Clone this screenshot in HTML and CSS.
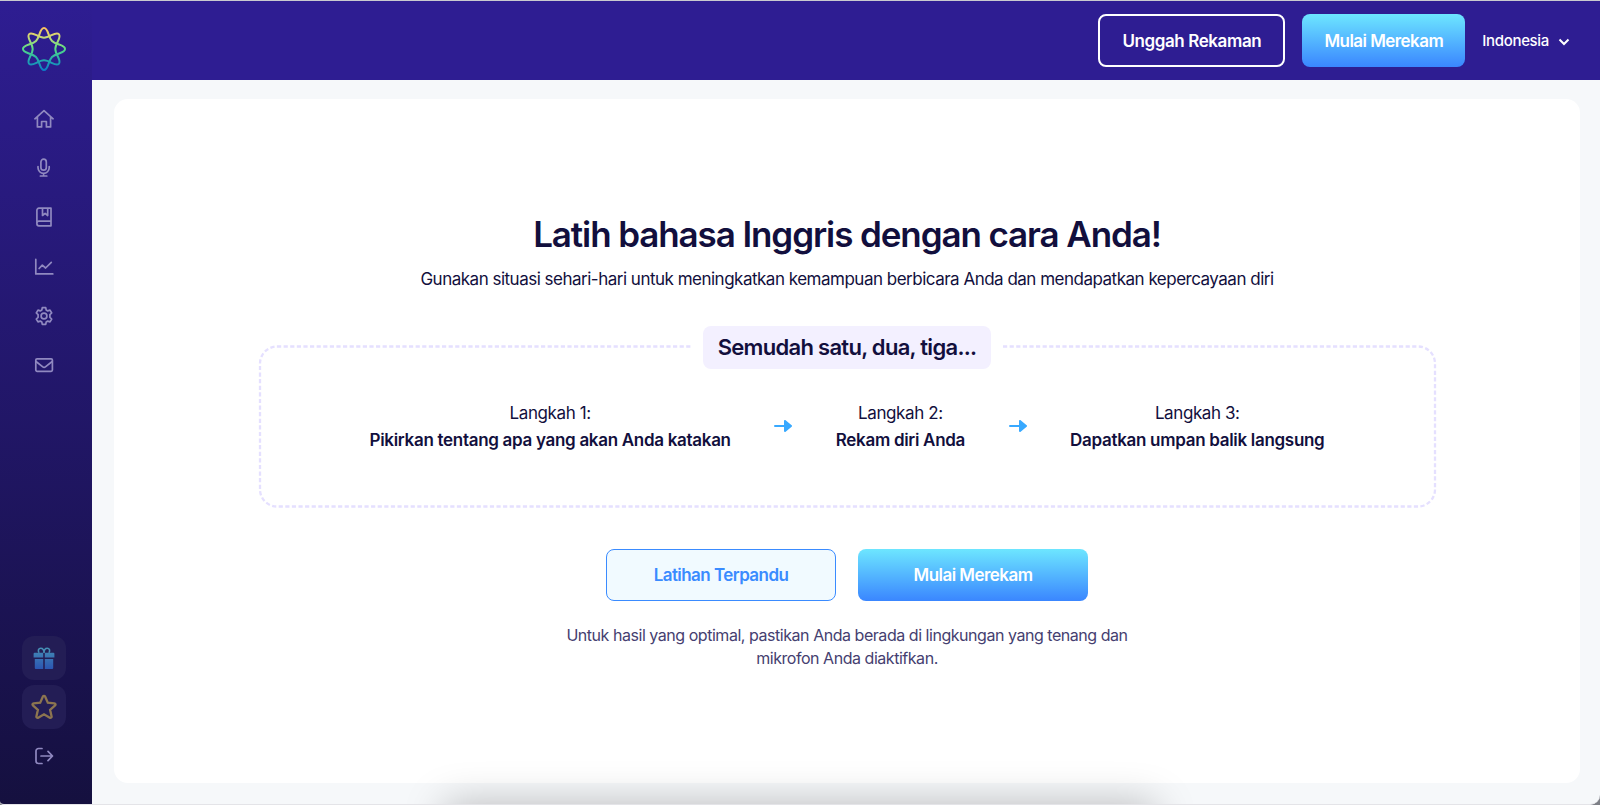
FILE: index.html
```html
<!DOCTYPE html>
<html lang="id">
<head>
  <meta charset="UTF-8">
  <meta name="viewport" content="width=device-width, initial-scale=1.0">
  <title>Latih bahasa Inggris</title>
  <link rel="stylesheet" href="styles.css">
</head>
<body>

<div class="app">
  <aside class="sidebar">
    <a class="logo" href="#">
      <svg width="46" height="46" viewBox="-23 -23 46 46" fill="none" stroke-width="2">
        <defs>
          <linearGradient id="logoA" gradientUnits="userSpaceOnUse" x1="0" y1="-22" x2="0" y2="22">
            <stop offset="0" stop-color="#ffbe5c"/>
            <stop offset=".2" stop-color="#d3d774"/>
            <stop offset=".5" stop-color="#55dc86"/>
            <stop offset=".75" stop-color="#22a9ae"/>
            <stop offset="1" stop-color="#0a78c8"/>
          </linearGradient>
          <linearGradient id="logoB" href="#logoA" gradientTransform="rotate(-45)"/>
        </defs>
        <path stroke="url(#logoA)" d="M0-21C4.5-21 3.8-12.2 8-8S21-4.5 21 0 12.2 3.8 8 8 4.5 21 0 21-3.8 12.2-8 8-21 4.5-21 0-12.2-3.8-8-8-4.5-21 0-21Z"/>
        <path stroke="url(#logoB)" transform="rotate(45)" d="M0-21C4.5-21 3.8-12.2 8-8S21-4.5 21 0 12.2 3.8 8 8 4.5 21 0 21-3.8 12.2-8 8-21 4.5-21 0-12.2-3.8-8-8-4.5-21 0-21Z"/>
      </svg>
    </a>

    <nav class="menu">
      <a href="#">
        <svg viewBox="0 0 20 20"><path d="M.9 9.8 10 1.6l9.1 8.2M3.4 7.8v10.1h4.2v-5.4h4.8v5.4h4.2V7.8"/></svg>
      </a>
      <a href="#">
        <svg viewBox="0 0 20 20"><rect x="6.900" y="1.200" width="5.400" height="11" rx="2.700"/><path d="M4 8.600v1.200a5.600 5.600 0 0 0 11.200 0V8.600M9.600 15.400V18M6.400 18h6.400"/></svg>
      </a>
      <a href="#">
        <svg viewBox="0 0 20 20"><path d="M17 14.200V1.200H4.900a2 2 0 0 0-2 2v13.600a2 2 0 0 0 2 2H17v-4.600H4.900a2 2 0 0 0-2 2M8.500 1.500v7l2.600-2.200 2.600 2.200v-7"/></svg>
      </a>
      <a href="#">
        <svg viewBox="0 0 20 20"><path d="M1.800 2.400v14.500h17M5.100 11.500l3.200-3.400 3.300 2.900 5.700-5.600"/></svg>
      </a>
      <a href="#">
        <svg viewBox="0 0 20 20"><circle cx="10" cy="10" r="2.900"/><path d="M8.300 1.600h3.400l.5 2.400 1.500.9 2.300-.8 1.700 2.900-1.800 1.700v2.600l1.800 1.700-1.700 2.900-2.300-.8-1.500.9-.5 2.400H8.300L7.800 16l-1.500-.9-2.300.8L2.300 13l1.800-1.700V8.700L2.300 7 4 4.100l2.300.8L7.800 4z"/></svg>
      </a>
      <a href="#">
        <svg viewBox="0 0 20 20"><rect x="1.800" y="3.800" width="16.600" height="12.600" rx="1.300"/><path d="m2 6.500 6.800 5.400a2 2 0 0 0 2.600 0l6.800-5.400"/></svg>
      </a>
    </nav>

    <div class="extras">
      <a class="tile gift" href="#">
        <svg width="22" height="22" viewBox="0 0 22 22">
          <defs>
            <linearGradient id="giftFill" gradientUnits="userSpaceOnUse" x1="0" y1="0" x2="0" y2="22">
              <stop offset="0" stop-color="#468fb5"/>
              <stop offset="1" stop-color="#2b56b2"/>
            </linearGradient>
          </defs>
          <path fill="url(#giftFill)" d="M1.600 5.800h8.600v4.600H.6V6.800a1 1 0 0 1 1-1ZM11.800 5.800h8.600a1 1 0 0 1 1 1v3.600h-9.600ZM1.800 12h8.400v10H2.800a1 1 0 0 1-1-1ZM11.800 12h8.400v9a1 1 0 0 1-1 1h-7.400Z"/>
          <path fill="none" stroke="#468fb5" stroke-width="1.600" d="M6.200 5.800C4.300 3.500 5.800 1.200 7.700 1.200S11 3 11 6C11 3 12.400 1.200 14.300 1.200S17.700 3.500 15.800 5.800"/>
        </svg>
      </a>
      <a class="tile star" href="#">
        <svg width="26" height="26" viewBox="0 0 26 26"><path d="M13 1.800c.5 0 .9.300 1.100.7l2.700 6.100 6.600.7c1.100.1 1.500 1.300.7 2l-5 4.500 1.500 6.600c.2 1-.9 1.800-1.800 1.300L13 20.300l-5.800 3.400c-.9.500-2-.3-1.800-1.300l1.500-6.600-5-4.500c-.8-.7-.4-1.900.7-2l6.600-.7 2.700-6.100c.2-.4.600-.7 1.100-.7Z"/></svg>
      </a>
      <a class="logout" href="#">
        <svg viewBox="0 0 20 20"><path d="M8 2.500H4.500A2.500 2.500 0 0 0 2 5v10a2.500 2.500 0 0 0 2.500 2.500H8M7 10h11M14 5.300l4.500 4.700-4.500 4.700"/></svg>
      </a>
    </div>
  </aside>

  <header class="topbar">
    <button class="btn btn-outline">Unggah Rekaman</button>
    <button class="btn btn-primary">Mulai Merekam</button>
    <div class="language">
      <span>Indonesia</span>
      <svg width="12" height="8" viewBox="0 0 12 8"><path d="m1.500 1.500 4.500 4.500 4.500-4.500"/></svg>
    </div>
  </header>

  <main class="content">
    <section class="card">
      <h1>Latih bahasa Inggris dengan cara Anda!</h1>
      <p class="subtitle">Gunakan situasi sehari-hari untuk meningkatkan kemampuan berbicara Anda dan mendapatkan kepercayaan diri</p>

      <div class="steps">
        <svg class="steps-border"><rect x="1" y="1.500" width="1175" height="160" rx="17"/></svg>
        <div class="steps-title"><h2>Semudah satu, dua, tiga...</h2></div>
        <div class="step"><span>Langkah 1:</span><strong>Pikirkan tentang apa yang akan Anda katakan</strong></div>
        <svg class="arrow" width="18" height="12" viewBox="0 0 18 12"><path d="M1 6h10"/><path class="head" d="M11 1v10l6-5z"/></svg>
        <div class="step"><span>Langkah 2:</span><strong>Rekam diri Anda</strong></div>
        <svg class="arrow" width="18" height="12" viewBox="0 0 18 12"><path d="M1 6h10"/><path class="head" d="M11 1v10l6-5z"/></svg>
        <div class="step"><span>Langkah 3:</span><strong>Dapatkan umpan balik langsung</strong></div>
      </div>

      <div class="actions">
        <button class="btn btn-light">Latihan Terpandu</button>
        <button class="btn btn-primary">Mulai Merekam</button>
      </div>
      <p class="note">Untuk hasil yang optimal, pastikan Anda berada di lingkungan yang tenang dan mikrofon Anda diaktifkan.</p>
    </section>
  </main>
</div>

</body>
</html>
```
FILE: styles.css
```css
* {
  box-sizing: border-box;
}

html {
  background: #7d7f86;
}

body {
  margin: 0;
  font-family: Inter, "Liberation Sans", sans-serif;
  color: #120f3d;
}

.app {
  position: relative;
  display: grid;
  grid-template-columns: 92px 1fr;
  grid-template-rows: 79px 1fr;
  height: 100vh;
  overflow: hidden;
  border-top: 1px solid #c9c9cf;
  border-bottom: 1px solid #e4e4e8;
  border-radius: 0 0 10px 4px;
  background: #f6f8fa;
}

/* soft shadow rising from the bottom edge */
.app::after {
  content: "";
  position: absolute;
  top: 100%;
  left: 445px;
  width: 710px;
  height: 60px;
  box-shadow: 0 0 40px rgba(0, 0, 0, 0.25);
}

/* sidebar */
.sidebar {
  grid-row: 1 / 3;
  display: flex;
  flex-direction: column;
  align-items: center;
  padding: 25px 5px 26px 0;
  background: linear-gradient(#2e1d92, #15103f);
}

.logo,
.logo svg {
  display: block;
}

.menu {
  display: flex;
  flex-direction: column;
  gap: 29.2px;
  margin-top: 37px;
}

.menu svg,
.logout svg {
  display: block;
  width: 20px;
  height: 20px;
  fill: none;
  stroke: #9089c0;
  stroke-width: 1.7;
  stroke-linecap: round;
  stroke-linejoin: round;
}

.extras {
  display: flex;
  flex-direction: column;
  align-items: center;
  gap: 5px;
  margin-top: auto;
}

.tile {
  display: flex;
  align-items: center;
  justify-content: center;
  width: 44px;
  height: 44px;
  border-radius: 12px;
  background: #231d55;
}

.star svg {
  fill: none;
  stroke: #8c7550;
  stroke-width: 2.3;
}

.logout {
  padding: 12px;
}

/* top bar */
.topbar {
  display: flex;
  align-items: center;
  justify-content: flex-end;
  gap: 17px;
  padding-right: 30px;
  background: #2e1d92;
}

.btn {
  height: 52px;
  padding: 0;
  border: none;
  border-radius: 8px;
  font-family: inherit;
  font-size: 17px;
  font-weight: 600;
  letter-spacing: -0.55px;
  white-space: nowrap;
  color: #fff;
}

.topbar .btn {
  height: 53px;
}

.btn-outline {
  width: 187px;
  border: 2px solid #fff;
  letter-spacing: -0.4px;
  background: none;
}

.btn-primary {
  width: 163px;
  background: linear-gradient(#6de6ff, #3a86ff);
}

.language {
  display: flex;
  align-items: center;
  gap: 9px;
  font-size: 15px;
  font-weight: 500;
  letter-spacing: -0.33px;
  color: #fff;
}

.language svg {
  margin-top: 3px;
  fill: none;
  stroke: #fff;
  stroke-width: 2;
}

/* main card */
.content {
  padding: 19px 20px 21px 22px;
}

.card {
  display: flex;
  flex-direction: column;
  align-items: center;
  height: 684px;
  padding-top: 111px;
  border-radius: 14px;
  background: #fff;
}

h1 {
  margin: 0;
  font-size: 35px;
  font-weight: 600;
  line-height: 48px;
  letter-spacing: -1.1px;
}

.subtitle {
  margin: 9px 0 0;
  font-size: 17px;
  line-height: 24px;
  letter-spacing: -0.5px;
}

.steps {
  position: relative;
  display: flex;
  align-items: center;
  justify-content: center;
  gap: 43.5px;
  width: 1177px;
  height: 162px;
  margin-top: 54px;
}

.steps-border {
  position: absolute;
  inset: 0;
  width: 100%;
  height: 100%;
  overflow: visible;
  fill: none;
  stroke: #e5e0ff;
  stroke-width: 2.3;
  stroke-dasharray: 4.2 2.4;
}

.steps-title {
  position: absolute;
  top: -19px;
  left: 50%;
  transform: translateX(-50%);
  padding: 0 11px;
  background: #fff;
}

h2 {
  margin: 0;
  width: 288px;
  border-radius: 8px;
  font-size: 22px;
  font-weight: 600;
  line-height: 43px;
  letter-spacing: -0.7px;
  text-align: center;
  background: #f3f0ff;
}

.step {
  display: flex;
  flex-direction: column;
  align-items: center;
  padding-top: 1px;
  font-size: 17px;
  line-height: 27px;
  letter-spacing: -0.4px;
}

.step strong {
  font-weight: 600;
  letter-spacing: -0.3px;
}

.arrow {
  stroke: #38a9ff;
  stroke-width: 2;
  stroke-linecap: round;
  stroke-linejoin: round;
}

.arrow .head {
  fill: #38a9ff;
}

.actions {
  display: flex;
  gap: 22px;
  margin-top: 42px;
}

.actions .btn {
  width: 230px;
}

.btn-light {
  border: 1px solid #3a8bff;
  color: #3a8bff;
  background: #f1faff;
}

.note {
  width: 580px;
  margin: 23px 0 0;
  font-size: 16px;
  line-height: 23px;
  letter-spacing: -0.46px;
  text-align: center;
  color: #454070;
}
```
